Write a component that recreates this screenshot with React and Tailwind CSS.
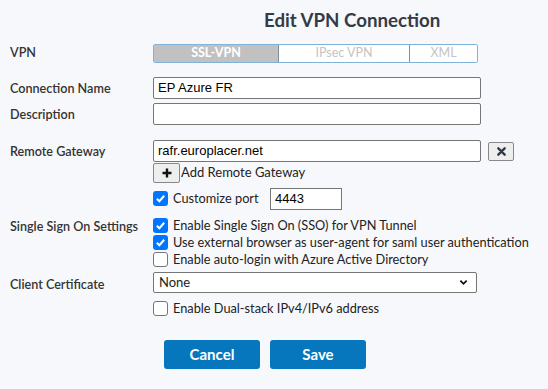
import React from 'react';

const LATO = { fontFamily: 'Lato, "Noto Sans", sans-serif' };

function Check({ on }) {
  return on ? (
    <span className="flex h-[15px] w-[15px] shrink-0 items-center justify-center rounded-[3px] bg-[#0075ff]">
      <svg viewBox="0 0 12 12" className="h-[11px] w-[11px]">
        <path d="M2 6.3 L4.8 9 L10 3" fill="none" stroke="#fff" strokeWidth="2.2" />
      </svg>
    </span>
  ) : (
    <span className="h-[15px] w-[15px] shrink-0 rounded-[3px] border border-[#767676] bg-white" />
  );
}

function CheckRow({ on, children, className = '' }) {
  return (
    <div className={`flex h-[17px] items-center gap-[5px] text-[12.75px] text-[#222] ${className}`}>
      <Check on={on} />
      <span>{children}</span>
    </div>
  );
}

function Label({ children, className = '' }) {
  return (
    <div className={`w-[143px] shrink-0 text-[12.6px] font-semibold text-[#333] ${className}`}>{children}</div>
  );
}

function TextInput({ value, className = '' }) {
  return (
    <div
      className={`flex h-[22px] items-center rounded-[2px] border border-[#767676] bg-white px-[4px] text-[13px] text-black ${className}`}
      style={{ fontFamily: '"Liberation Sans", Arial, sans-serif' }}
    >
      {value}
    </div>
  );
}

export default function App() {
  return (
    <div className="h-[389px] w-[548px] bg-[#f7f8fb] pl-[10px]" style={LATO}>
      <div className="pl-[254px] pt-[7px] text-[18.7px] font-bold leading-[26px] text-[#333b45]">
        Edit VPN Connection
      </div>

      {/* VPN type */}
      <div className="mt-[11px] flex items-center">
        <Label>VPN</Label>
        <div className="flex h-[19px] w-[325px] overflow-hidden rounded-[2px] border border-[#7fb3da] text-[12.5px] font-bold">
          <div className="flex w-[124px] items-center justify-center bg-[#c1c1c1] text-white">SSL-VPN</div>
          <div className="flex w-[131px] items-center justify-center border-l border-[#7a8fa0] bg-white font-normal text-[#c4c4c4]">IPsec VPN</div>
          <div className="flex flex-1 items-center justify-center border-l border-[#7a8fa0] bg-white font-normal text-[#c4c4c4]">XML</div>
        </div>
      </div>

      <div className="mt-[14px] flex items-center">
        <Label className="pt-[2px]">Connection Name</Label>
        <TextInput value="EP Azure FR" className="w-[328px]" />
      </div>

      <div className="mt-[4px] flex items-center">
        <Label className="pt-[2px]">Description</Label>
        <TextInput value="" className="w-[328px]" />
      </div>

      <div className="mt-[15px] flex items-center">
        <Label className="pt-[2px]">Remote Gateway</Label>
        <TextInput value="rafr.europlacer.net" className="w-[328px]" />
        <div className="ml-[7px] flex h-[19px] w-[26px] items-center justify-center rounded-[2px] border border-[#888] bg-[#eeeeee]">
          <svg viewBox="0 0 10 10" className="h-[9px] w-[9px]">
            <path d="M1.5 1.5 L8.5 8.5 M8.5 1.5 L1.5 8.5" stroke="#2e3a48" strokeWidth="2.6" strokeLinecap="round" />
          </svg>
        </div>
      </div>

      <div className="ml-[143px] flex h-[21px] items-center">
        <div className="flex h-[20px] w-[27px] items-center justify-center rounded-[2px] border border-[#888] bg-[#eeeeee]">
          <svg viewBox="0 0 10 10" className="h-[10px] w-[10px]">
            <path d="M5 0.5 V9.5 M0.5 5 H9.5" stroke="#111" strokeWidth="2.4" />
          </svg>
        </div>
        <span className="ml-[1px] text-[13px] text-[#222]">Add Remote Gateway</span>
      </div>

      <div className="ml-[143px] mt-[5px] flex h-[21px] items-center">
        <Check on />
        <span className="ml-[5px] w-[97px] text-[12.75px] text-[#222]">Customize port</span>
        <TextInput value="4443" className="h-[21px] w-[72px] rounded-none" />
      </div>

      <div className="mt-[8px] flex">
        <Label className="pt-[1px]">Single Sign On Settings</Label>
        <div className="flex flex-col">
          <CheckRow on>Enable Single Sign On (SSO) for VPN Tunnel</CheckRow>
          <CheckRow on>Use external browser as user-agent for saml user authentication</CheckRow>
          <CheckRow>Enable auto-login with Azure Active Directory</CheckRow>
        </div>
      </div>

      <div className="mt-[3px] flex items-center">
        <Label className="pt-[5px]">Client Certificate</Label>
        <div className="flex h-[21px] w-[324px] items-center justify-between rounded-[2px] border border-[#767676] bg-white pl-[5px] pr-[8px] text-[13px] text-[#222]">
          <span>None</span>
          <svg viewBox="0 0 10 10" className="h-[9px] w-[9px]">
            <path d="M1.5 3 L5 6.5 L8.5 3" fill="none" stroke="#111" strokeWidth="2" />
          </svg>
        </div>
      </div>

      <CheckRow className="ml-[143px] mt-[5px]">Enable Dual-stack IPv4/IPv6 address</CheckRow>

      <div className="ml-[154px] mt-[23px] flex gap-[10px]">
        <button className="h-[29px] w-[96px] rounded-[3px] bg-[#0677bd] text-[15px] font-bold text-white">Cancel</button>
        <button className="h-[29px] w-[96px] rounded-[3px] bg-[#0677bd] text-[15px] font-bold text-white">Save</button>
      </div>
    </div>
  );
}
